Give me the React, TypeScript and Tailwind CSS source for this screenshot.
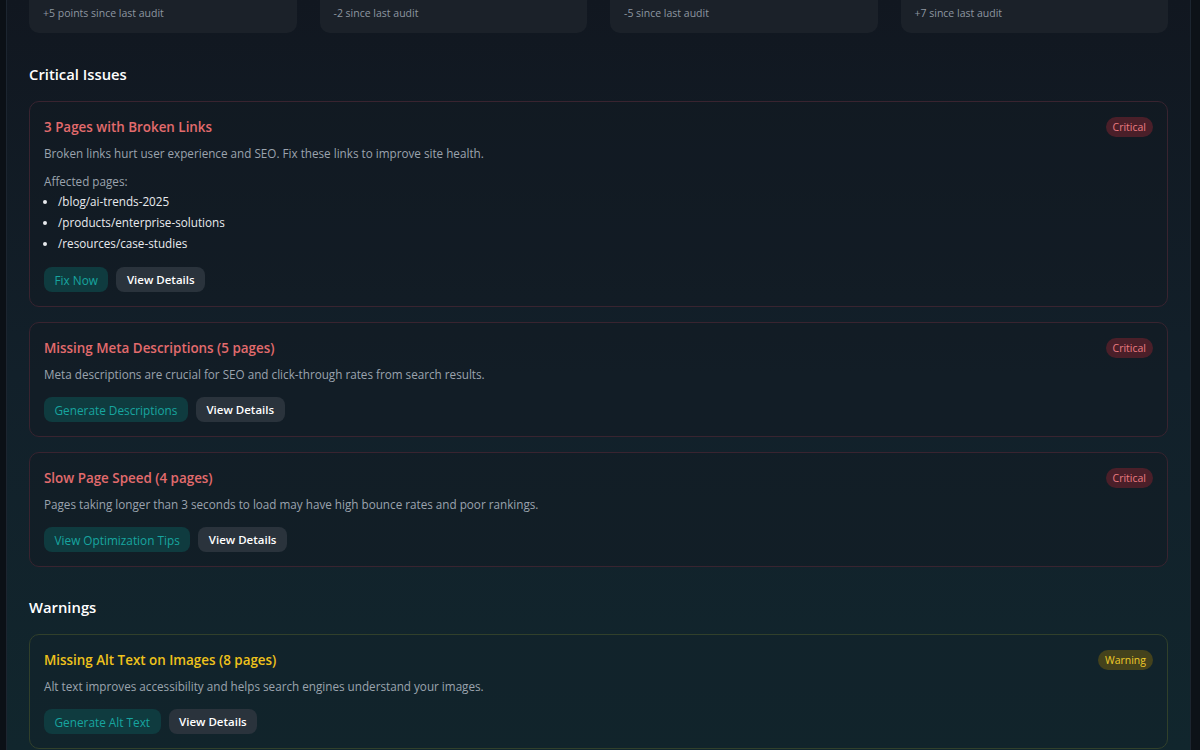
import { ReactNode } from "react";

type Tone = "critical" | "warning";

interface Issue {
  title: string;
  description: string;
  tone: Tone;
  action: string;
  pages?: string[];
}

const stats = [
  { label: "SEO Score", value: "78", delta: "+5 points since last audit" },
  { label: "Pages Crawled", value: "142", delta: "-2 since last audit" },
  { label: "Issues Found", value: "23", delta: "-5 since last audit" },
  { label: "Passed Checks", value: "96", delta: "+7 since last audit" },
];

const critical: Issue[] = [
  {
    title: "3 Pages with Broken Links",
    description:
      "Broken links hurt user experience and SEO. Fix these links to improve site health.",
    tone: "critical",
    action: "Fix Now",
    pages: [
      "/blog/ai-trends-2025",
      "/products/enterprise-solutions",
      "/resources/case-studies",
    ],
  },
  {
    title: "Missing Meta Descriptions (5 pages)",
    description:
      "Meta descriptions are crucial for SEO and click-through rates from search results.",
    tone: "critical",
    action: "Generate Descriptions",
  },
  {
    title: "Slow Page Speed (4 pages)",
    description:
      "Pages taking longer than 3 seconds to load may have high bounce rates and poor rankings.",
    tone: "critical",
    action: "View Optimization Tips",
  },
];

const warnings: Issue[] = [
  {
    title: "Missing Alt Text on Images (8 pages)",
    description:
      "Alt text improves accessibility and helps search engines understand your images.",
    tone: "warning",
    action: "Generate Alt Text",
  },
];

const SectionTitle = ({ children }: { children: ReactNode }) => (
  <h2 className="mb-[15px] text-[14.8px] font-semibold leading-6 text-white">
    {children}
  </h2>
);

const IssueCard = ({ issue }: { issue: Issue }) => {
  const isCritical = issue.tone === "critical";
  return (
    <div
      className={`rounded-[10px] border px-[14px] pt-[14px] pb-[14px] ${
        isCritical
          ? "border-[#392430] bg-[#121a22]/50"
          : "border-[#31402b] bg-[#12212a]/50"
      }`}
    >
      <div className="flex items-start justify-between">
        <h3
          className={`text-[13.4px] font-semibold leading-[22px] ${
            isCritical ? "text-[#e26b6d]" : "text-[#eec21c]"
          }`}
        >
          {issue.title}
        </h3>
        <span
          className={`mt-[1px] rounded-full px-[7px] py-[2px] text-[10.5px] leading-4 ${
            isCritical
              ? "bg-[#4a1f29] text-[#ec7c82]"
              : "bg-[#44421c] text-[#efcb2a]"
          }`}
        >
          {isCritical ? "Critical" : "Warning"}
        </span>
      </div>
      <p className="mt-[5px] text-[11.7px] leading-5 text-[#9ba3ae]">
        {issue.description}
      </p>
      {issue.pages && (
        <div className="mt-[8px]">
          <p className="text-[11.7px] leading-5 text-[#9ba3ae]">Affected pages:</p>
          <ul className="list-disc pl-[14px] text-[11.7px] leading-[21px] text-[#e8eaee]">
            {issue.pages.map((p) => (
              <li key={p}>{p}</li>
            ))}
          </ul>
        </div>
      )}
      <div className={`${issue.pages ? "mt-[13px]" : "mt-[13px]"} flex gap-[8px]`}>
        <button className="rounded-[8px] bg-[#0f3b3f] px-[10.5px] py-[3.5px] text-[11.8px] leading-[18px] text-[#17a59f]">
          {issue.action}
        </button>
        <button className="rounded-[8px] bg-[#2a333c] px-[10.5px] py-[3.5px] text-[11.5px] font-semibold leading-[18px] text-white">
          View Details
        </button>
      </div>
    </div>
  );
};

export default function App() {
  return (
    <div
      className="flex h-[750px] w-[1200px] overflow-hidden bg-[#0c1117]"
      style={{ fontFamily: '"Open Sans", "Noto Sans", sans-serif' }}
    >
      <div className="w-[7px] shrink-0 border-r border-[#1c2530] bg-[#0b1016]" />
      <main className="flex-1 overflow-hidden bg-gradient-to-b from-[#111720] via-[#12202a] to-[#11262d]">
        <div className="-mt-[65px] px-[22px]">
          <div className="grid grid-cols-4 gap-[23px]">
            {stats.map((s) => (
              <div
                key={s.label}
                className="rounded-[10px] bg-[#1b2129] px-[14px] pt-[14px] pb-[12px]"
              >
                <p className="text-[12px] leading-4 text-[#9ba3ae]">{s.label}</p>
                <p className="mt-[6px] text-[26px] font-bold leading-8 text-white">
                  {s.value}
                </p>
                <p className="mt-[2px] text-[10.5px] leading-4 text-[#8d96a0]">
                  {s.delta}
                </p>
              </div>
            ))}
          </div>

          <section className="mt-[29px]">
            <SectionTitle>Critical Issues</SectionTitle>
            <div className="flex flex-col gap-[15px]">
              {critical.map((i) => (
                <IssueCard key={i.title} issue={i} />
              ))}
            </div>
          </section>

          <section className="mt-[28px]">
            <SectionTitle>Warnings</SectionTitle>
            <div className="flex flex-col gap-[15px]">
              {warnings.map((i) => (
                <IssueCard key={i.title} issue={i} />
              ))}
            </div>
          </section>
        </div>
      </main>
      <div className="w-[10px] shrink-0 border-l border-[#1c2530] bg-[#0d1218]" />
    </div>
  );
}
